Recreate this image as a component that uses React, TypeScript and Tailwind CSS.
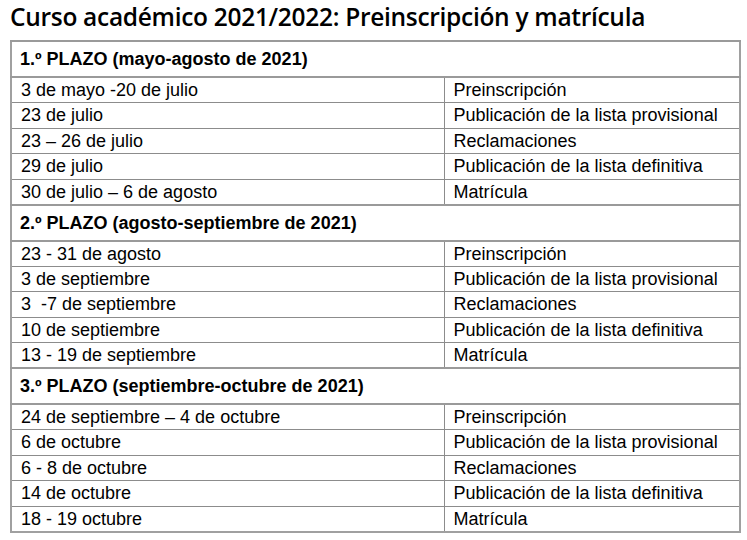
const plazos = [
  {
    title: "1.º PLAZO (mayo-agosto de 2021)",
    rows: [
      ["3 de mayo -20 de julio", "Preinscripción"],
      ["23 de julio", "Publicación de la lista provisional"],
      ["23 – 26 de julio", "Reclamaciones"],
      ["29 de julio", "Publicación de la lista definitiva"],
      ["30 de julio – 6 de agosto", "Matrícula"],
    ],
  },
  {
    title: "2.º PLAZO (agosto-septiembre de 2021)",
    rows: [
      ["23 - 31 de agosto", "Preinscripción"],
      ["3 de septiembre", "Publicación de la lista provisional"],
      ["3  -7 de septiembre", "Reclamaciones"],
      ["10 de septiembre", "Publicación de la lista definitiva"],
      ["13 - 19 de septiembre", "Matrícula"],
    ],
  },
  {
    title: "3.º PLAZO (septiembre-octubre de 2021)",
    rows: [
      ["24 de septiembre – 4 de octubre", "Preinscripción"],
      ["6 de octubre", "Publicación de la lista provisional"],
      ["6 - 8 de octubre", "Reclamaciones"],
      ["14 de octubre", "Publicación de la lista definitiva"],
      ["18 - 19 octubre", "Matrícula"],
    ],
  },
];

export default function App() {
  return (
    <div className="w-[747px] h-[540px] bg-white overflow-hidden">
      <h1 className="pl-[10px] h-[40px] text-[24.5px] leading-[34px] font-semibold tracking-[-0.3px] text-black font-['Open_Sans',sans-serif]">
        Curso académico 2021/2022: Preinscripción y matrícula
      </h1>
      <table className="ml-[10px] w-[731px] border-collapse border-2 border-[#a0a0a0] font-['Liberation_Sans',Arial,sans-serif] text-[18px] text-black">
        <tbody>
          {plazos.map((p) => (
            <Plazo key={p.title} title={p.title} rows={p.rows} />
          ))}
        </tbody>
      </table>
    </div>
  );
}

function Plazo({ title, rows }: { title: string; rows: string[][] }) {
  return (
    <>
      <tr className="h-[36px]">
        <td colSpan={2} className="border-y-2 border-[#9a9a9a] px-[8px] font-bold leading-none">
          {title}
        </td>
      </tr>
      {rows.map(([fecha, tramite]) => (
        <tr key={fecha + tramite} className="h-[25.5px]">
          <td className="w-[433px] border border-[#8c8c8c] px-[9px] leading-none whitespace-pre">{fecha}</td>
          <td className="border border-[#8c8c8c] px-[9px] leading-none">{tramite}</td>
        </tr>
      ))}
    </>
  );
}
